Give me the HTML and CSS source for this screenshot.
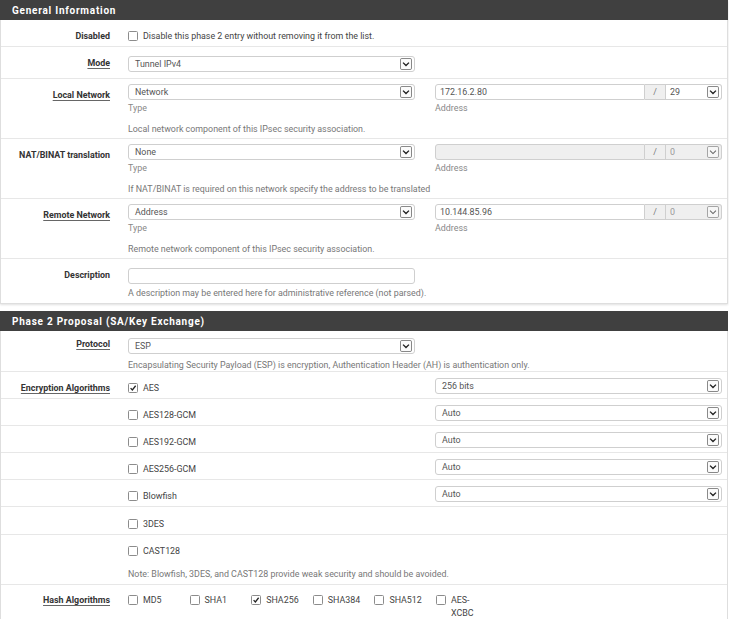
FILE: index.html
```html
<!DOCTYPE html>
<html>
<head>
<meta charset="utf-8">
<link rel="stylesheet" href="styles.css">
</head>
<body>
<div class="panel">
  <div class="panel-heading">General Information</div>

  <div class="row">
    <div class="lbl">Disabled</div>
    <div class="ctl chkline">
      <label class="chk full"><span class="box"></span>Disable this phase 2 entry without removing it from the list.</label>
    </div>
  </div>

  <div class="row">
    <div class="lbl"><span class="u">Mode</span></div>
    <div class="ctl pt9">
      <div class="select"><span>Tunnel IPv4</span><svg class="arr" viewBox="0 0 13 13"><rect x="0.5" y="0.5" width="12" height="12" rx="1.5"/><path d="M3.3 5 L6.5 8.2 L9.7 5"/></svg></div>
    </div>
  </div>

  <div class="row">
    <div class="lbl"><span class="u">Local Network</span></div>
    <div class="ctl net">
      <div>
        <div class="select"><span>Network</span><svg class="arr" viewBox="0 0 13 13"><rect x="0.5" y="0.5" width="12" height="12" rx="1.5"/><path d="M3.3 5 L6.5 8.2 L9.7 5"/></svg></div>
        <div class="cap">Type</div>
      </div>
      <div>
        <div class="addr">
          <div class="in">172.16.2.80</div>
          <div class="slash">/</div>
          <div class="bits"><span>29</span><svg class="arr" viewBox="0 0 13 13"><rect x="0.5" y="0.5" width="12" height="12" rx="1.5"/><path d="M3.3 5 L6.5 8.2 L9.7 5"/></svg></div>
        </div>
        <div class="cap">Address</div>
      </div>
      <div class="help full">Local network component of this IPsec security association.</div>
    </div>
  </div>

  <div class="row">
    <div class="lbl">NAT/BINAT translation</div>
    <div class="ctl net">
      <div>
        <div class="select"><span>None</span><svg class="arr" viewBox="0 0 13 13"><rect x="0.5" y="0.5" width="12" height="12" rx="1.5"/><path d="M3.3 5 L6.5 8.2 L9.7 5"/></svg></div>
        <div class="cap">Type</div>
      </div>
      <div>
        <div class="addr disabled">
          <div class="in"></div>
          <div class="slash">/</div>
          <div class="bits"><span>0</span><svg class="arr" viewBox="0 0 13 13"><rect x="0.5" y="0.5" width="12" height="12" rx="1.5"/><path d="M3.3 5 L6.5 8.2 L9.7 5"/></svg></div>
        </div>
        <div class="cap">Address</div>
      </div>
      <div class="help full">If NAT/BINAT is required on this network specify the address to be translated</div>
    </div>
  </div>

  <div class="row">
    <div class="lbl"><span class="u">Remote Network</span></div>
    <div class="ctl net">
      <div>
        <div class="select"><span>Address</span><svg class="arr" viewBox="0 0 13 13"><rect x="0.5" y="0.5" width="12" height="12" rx="1.5"/><path d="M3.3 5 L6.5 8.2 L9.7 5"/></svg></div>
        <div class="cap">Type</div>
      </div>
      <div>
        <div class="addr">
          <div class="in">10.144.85.96</div>
          <div class="slash">/</div>
          <div class="bits soft"><span>0</span><svg class="arr" viewBox="0 0 13 13"><rect x="0.5" y="0.5" width="12" height="12" rx="1.5"/><path d="M3.3 5 L6.5 8.2 L9.7 5"/></svg></div>
        </div>
        <div class="cap">Address</div>
      </div>
      <div class="help full">Remote network component of this IPsec security association.</div>
    </div>
  </div>

  <div class="row last">
    <div class="lbl">Description</div>
    <div class="ctl desc">
      <div class="input"></div>
      <div class="help full">A description may be entered here for administrative reference (not parsed).</div>
    </div>
  </div>
</div>

<div class="panel second">
  <div class="panel-heading">Phase 2 Proposal (SA/Key Exchange)</div>

  <div class="row">
    <div class="lbl lp"><span class="u">Protocol</span></div>
    <div class="ctl proto">
      <div class="select"><span>ESP</span><svg class="arr" viewBox="0 0 13 13"><rect x="0.5" y="0.5" width="12" height="12" rx="1.5"/><path d="M3.3 5 L6.5 8.2 L9.7 5"/></svg></div>
      <div class="help full">Encapsulating Security Payload (ESP) is encryption, Authentication Header (AH) is authentication only.</div>
    </div>
  </div>

  <div class="row">
    <div class="lbl"><span class="u">Encryption Algorithms</span></div>
    <div class="ctl enc">
      <label class="chk"><span class="box on"><svg viewBox="0 0 10 10"><path d="M2 5.2 L4.2 7.4 L8.3 2.2"/></svg></span>AES</label>
      <div class="select"><span>256 bits</span><svg class="arr" viewBox="0 0 13 13"><rect x="0.5" y="0.5" width="12" height="12" rx="1.5"/><path d="M3.3 5 L6.5 8.2 L9.7 5"/></svg></div>
    </div>
  </div>

  <div class="row">
    <div class="lbl"></div>
    <div class="ctl enc">
      <label class="chk"><span class="box"></span>AES128-GCM</label>
      <div class="select"><span>Auto</span><svg class="arr" viewBox="0 0 13 13"><rect x="0.5" y="0.5" width="12" height="12" rx="1.5"/><path d="M3.3 5 L6.5 8.2 L9.7 5"/></svg></div>
    </div>
  </div>

  <div class="row">
    <div class="lbl"></div>
    <div class="ctl enc">
      <label class="chk"><span class="box"></span>AES192-GCM</label>
      <div class="select"><span>Auto</span><svg class="arr" viewBox="0 0 13 13"><rect x="0.5" y="0.5" width="12" height="12" rx="1.5"/><path d="M3.3 5 L6.5 8.2 L9.7 5"/></svg></div>
    </div>
  </div>

  <div class="row">
    <div class="lbl"></div>
    <div class="ctl enc">
      <label class="chk"><span class="box"></span>AES256-GCM</label>
      <div class="select"><span>Auto</span><svg class="arr" viewBox="0 0 13 13"><rect x="0.5" y="0.5" width="12" height="12" rx="1.5"/><path d="M3.3 5 L6.5 8.2 L9.7 5"/></svg></div>
    </div>
  </div>

  <div class="row">
    <div class="lbl"></div>
    <div class="ctl enc">
      <label class="chk"><span class="box"></span>Blowfish</label>
      <div class="select"><span>Auto</span><svg class="arr" viewBox="0 0 13 13"><rect x="0.5" y="0.5" width="12" height="12" rx="1.5"/><path d="M3.3 5 L6.5 8.2 L9.7 5"/></svg></div>
    </div>
  </div>

  <div class="row">
    <div class="lbl"></div>
    <div class="ctl chkline des">
      <label class="chk full"><span class="box"></span>3DES</label>
    </div>
  </div>

  <div class="row">
    <div class="lbl"></div>
    <div class="ctl cast">
      <label class="chk full"><span class="box"></span>CAST128</label>
      <div class="help full">Note: Blowfish, 3DES, and CAST128 provide weak security and should be avoided.</div>
    </div>
  </div>

  <div class="row last">
    <div class="lbl lh"><span class="u">Hash Algorithms</span></div>
    <div class="ctl hashrow">
      <div class="hash full">
        <label class="hitem"><span class="box"></span><span>MD5</span></label>
        <label class="hitem"><span class="box"></span><span>SHA1</span></label>
        <label class="hitem"><span class="box on"><svg viewBox="0 0 10 10"><path d="M2 5.2 L4.2 7.4 L8.3 2.2"/></svg></span><span>SHA256</span></label>
        <label class="hitem"><span class="box"></span><span>SHA384</span></label>
        <label class="hitem"><span class="box"></span><span>SHA512</span></label>
        <label class="hitem"><span class="box"></span><span>AES-<br>XCBC</span></label>
      </div>
    </div>
  </div>
</div>
</body>
</html>
```

FILE: styles.css
```css
* { box-sizing: border-box; }

body {
  margin: 0;
  background: #fff;
  font-family: Roboto, "Liberation Sans", sans-serif;
  font-size: 8.9px;
  color: #333;
}

.panel {
  width: 728px;
  border: 1px solid #dedede;
  border-top: 0;
  box-shadow: 0 1px 2px rgba(0, 0, 0, 0.12);
}

.panel.second {
  margin-top: 7px;
  border-bottom: 0;
  box-shadow: none;
}

.panel-heading {
  margin: 0 -1px;
  height: 20px;
  line-height: 21px;
  padding-left: 12px;
  background: #404040;
  color: #fff;
  font-size: 10px;
  font-weight: 700;
  letter-spacing: 0.75px;
}

.row {
  display: grid;
  grid-template-columns: 109px 594px;
  column-gap: 18px;
  padding-right: 5px;
  border-bottom: 1px solid #e7e7e7;
}

.row.last { border-bottom: 0; }

.lbl {
  text-align: right;
  font-weight: 700;
  color: #333;
  line-height: 12px;
  padding-top: 10px;
}

.lbl.lp { padding-top: 7px; }
.lbl.lh { padding-top: 9px; }

.u {
  text-decoration: underline;
  text-decoration-color: #666;
  text-underline-offset: 2px;
}

.ctl {
  display: grid;
  grid-template-columns: 287px 287px;
  column-gap: 20px;
  align-content: start;
  padding: 5px 0 5px;
}

.ctl.pt9 { padding: 9px 0 6px; }
.ctl.chkline { padding: 10px 0 4px; }
.ctl.chkline.des { padding: 11px 0 4px; }
.ctl.net { padding: 5px 0 4px; }
.ctl.desc { padding: 9px 0 4px; }
.ctl.proto { padding: 7px 0 0; }
.ctl.enc { padding: 6px 0 4px; }
.ctl.cast { padding: 10px 0 4px; }
.ctl.hashrow { padding: 9px 0 4px; }

.full { grid-column: 1 / -1; }

.chk {
  display: flex;
  align-items: center;
  line-height: 12px;
  color: #444;
}

.ctl.enc > .chk { margin-top: 4px; }

.box {
  display: inline-flex;
  flex: none;
  width: 10px;
  height: 10px;
  margin-right: 5px;
  border: 1px solid #8c8c8c;
  border-radius: 1.5px;
  background: #fff;
}

.box svg {
  width: 8px;
  height: 8px;
  fill: none;
  stroke: #222;
  stroke-width: 1.6;
}

.select {
  position: relative;
  display: flex;
  align-items: center;
  height: 16px;
  padding-left: 6px;
  border: 1px solid #cfcfcf;
  border-radius: 3px;
  background: #fff;
  color: #555;
}

.arr {
  position: absolute;
  right: 2px;
  top: 1px;
  width: 12px;
  height: 12px;
}

.arr rect {
  fill: #fbfbfb;
  stroke: #7a7a7a;
  stroke-width: 1;
}

.arr path {
  fill: none;
  stroke: #1e1e1e;
  stroke-width: 1.5;
}

.addr {
  display: flex;
  height: 16px;
  color: #555;
}

.addr .in {
  flex: 1;
  display: flex;
  align-items: center;
  padding-left: 4px;
  border: 1px solid #cfcfcf;
  border-radius: 3px 0 0 3px;
  background: #fff;
}

.addr .slash {
  width: 21px;
  display: flex;
  align-items: center;
  justify-content: center;
  border: 1px solid #cfcfcf;
  border-left: 0;
  background: #efefef;
  color: #777;
}

.addr .bits {
  position: relative;
  width: 56px;
  display: flex;
  align-items: center;
  padding-left: 4px;
  border: 1px solid #cfcfcf;
  border-left: 0;
  border-radius: 0 3px 3px 0;
  background: #fff;
}

.addr.disabled .in,
.addr.disabled .bits,
.addr .bits.soft {
  background: #efefef;
  color: #999;
}

.addr.disabled .arr rect,
.addr .bits.soft .arr rect {
  stroke: #9a9a9a;
  fill: #f6f6f6;
}

.addr.disabled .arr path,
.addr .bits.soft .arr path {
  stroke: #666;
  stroke-width: 1.1;
}

.input {
  height: 16px;
  border: 1px solid #cfcfcf;
  border-radius: 3px;
  background: #fff;
}

.cap {
  margin-top: 2px;
  line-height: 12px;
  color: #888;
}

.help {
  line-height: 12px;
  color: #777;
}

.net .help { margin-top: 9px; margin-bottom: -1px; }
.desc .help { margin-top: 3px; }
.proto .help { margin-top: 5px; }
.cast .help { margin-top: 11px; }

.hash {
  display: flex;
}

.hitem {
  width: 61.6px;
  display: flex;
  align-items: flex-start;
  line-height: 13px;
  color: #444;
}

.hitem .box { margin-top: 1px; }
```
